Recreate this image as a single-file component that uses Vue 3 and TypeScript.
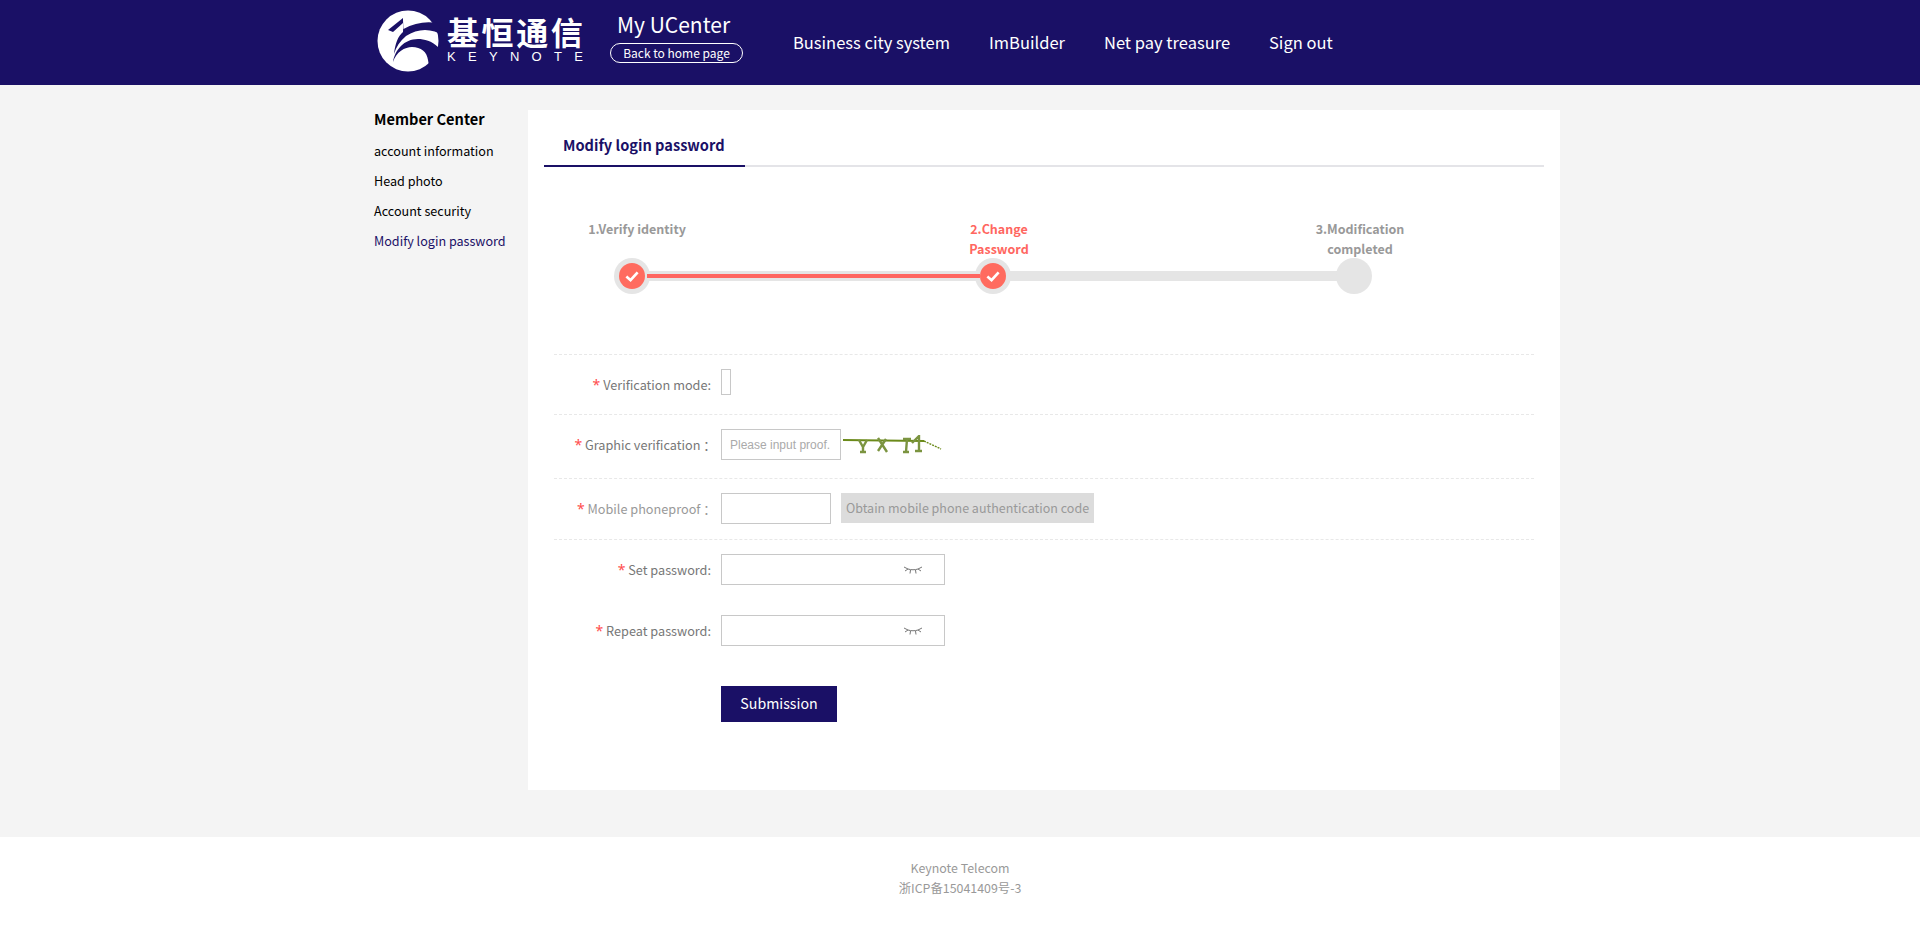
<script setup lang="ts">
const navItems: string[] = ['Business city system', 'ImBuilder', 'Net pay treasure', 'Sign out']
const sideItems: string[] = ['account information', 'Head photo', 'Account security', 'Modify login password']
</script>

<template>
  <div class="page">
    <header class="header">
      <div class="wrap head-in">
        <div class="logo">
          <svg class="mark" viewBox="0 0 72 70" width="72" height="70">
            <circle cx="34" cy="35" r="30.5" fill="#fff" />
            <path d="M29 12 L14 24 L19 26 L29 17 Z" fill="#1a1066" />
            <path d="M29.5 14 L29.5 23 C40 17 52 15 63 17 L70 30 C58 22 44 22 32 30 C26 35 22 41 20 48 C21 38 24 30 29 26 Z" fill="#1a1066" />
            <path d="M19 56 C22 46 31 41 38 41 C47 41 53 46 54 54 L56 66 L72 62 L72 38 L64 41 C58 35 50 33 44 33 C30 33 21 44 19 56 Z" fill="#1a1066" />
          </svg>
          <div class="logo-text">
            <div class="logo-cn">基恒通信</div>
            <div class="logo-en">KEYNOTE</div>
          </div>
        </div>
        <div class="ucenter">
          <div class="uc-title">My UCenter</div>
          <a class="uc-back">Back to home page</a>
        </div>
        <nav class="nav">
          <a v-for="n in navItems" :key="n">{{ n }}</a>
        </nav>
      </div>
    </header>

    <main class="wrap body">
      <aside class="side">
        <h3>Member Center</h3>
        <a v-for="(s, i) in sideItems" :key="s" :class="{ on: i === 3 }">{{ s }}</a>
      </aside>
      <section class="card">
        <div class="tabs"><span class="tab">Modify login password</span></div>

        <div class="steps">
          <div class="labels">
            <span class="lb l1">1.Verify identity</span>
            <span class="lb l2">2.Change<br />Password</span>
            <span class="lb l3">3.Modification<br />completed</span>
          </div>
          <div class="track">
            <div class="dot done">
              <i><svg viewBox="0 0 16 16" width="18" height="18"><path d="M3 8.5 L6.7 11.7 L13 4.8" fill="none" stroke="#fff" stroke-width="2.4" /></svg></i>
            </div>
            <div class="seg red"></div>
            <div class="dot done">
              <i><svg viewBox="0 0 16 16" width="18" height="18"><path d="M3 8.5 L6.7 11.7 L13 4.8" fill="none" stroke="#fff" stroke-width="2.4" /></svg></i>
            </div>
            <div class="seg"></div>
            <div class="dot"></div>
          </div>
        </div>

        <form class="form" @submit.prevent>
          <div class="row r1 dash">
            <label class="lab"><em>*</em> Verification mode:</label>
            <span class="mini"></span>
          </div>
          <div class="row r2 dash">
            <label class="lab sp"><em>*</em> Graphic verification ：</label>
            <input class="inp w120" placeholder="Please input proof." />
            <svg class="captcha" viewBox="0 0 100 24" width="100" height="24">
              <path d="M1 5 L82 6" stroke="#6b8a1a" stroke-width="2" fill="none" />
              <path d="M82 6 L99 14" stroke="#6b8a1a" stroke-width="1.4" stroke-dasharray="2 1" fill="none" />
              <g stroke="#7b9440" stroke-width="2.4" fill="none">
                <path d="M17 5 L21 12 L25 5 M21 12 L21 17 M18 17 L24 17" />
                <path d="M36 3 L45 17 M44 4 L36 16" />
                <path d="M61 4 L69 4 M65 4 L64 17 M61 17 L67 17" />
                <path d="M70 8 L77 1 L77 16 M73 16 L80 16" />
              </g>
            </svg>
          </div>
          <div class="row r3 dash">
            <label class="lab sp lt"><em>*</em> Mobile phoneproof ：</label>
            <input class="inp w110" />
            <button type="button" class="code">Obtain mobile phone authentication code</button>
          </div>
          <div class="row r4 dash">
            <label class="lab"><em>*</em> Set password:</label>
            <div class="pwd">
              <svg viewBox="0 0 18 8" width="18" height="8"><path d="M0 1 L4 3 C7 4 11 4 14 3 L18 1 M1 5 L4 3 M14 3 L17 5 M6.5 4 L6 7.5 M11.5 4 L12 7.5" fill="none" stroke="#777" stroke-width="1" /></svg>
            </div>
          </div>
          <div class="row r5">
            <label class="lab"><em>*</em> Repeat password:</label>
            <div class="pwd">
              <svg viewBox="0 0 18 8" width="18" height="8"><path d="M0 1 L4 3 C7 4 11 4 14 3 L18 1 M1 5 L4 3 M14 3 L17 5 M6.5 4 L6 7.5 M11.5 4 L12 7.5" fill="none" stroke="#777" stroke-width="1" /></svg>
            </div>
          </div>
          <button type="submit" class="submit">Submission</button>
        </form>
      </section>
    </main>

    <footer class="footer">
      <p>Keynote Telecom</p>
      <p>浙ICP备15041409号-3</p>
    </footer>
  </div>
</template>

<style>
html, body { margin: 0; background: #f4f4f4; }
</style>

<style scoped>
.page {
  font-family: "Noto Sans CJK SC", "Noto Sans", sans-serif;
  min-height: 937px;
  display: flex;
  flex-direction: column;
  background: #f4f4f4;
  font-size: 12px;
  color: #333;
}
.wrap { width: 1200px; margin: 0 auto; }
.header { height: 85px; background: #1a1066; color: #fff; }
.head-in { display: flex; height: 85px; }
.logo { display: flex; width: 250px; padding: 6px 0 0 14px; box-sizing: border-box; flex: none; }
.mark { flex: none; }
.logo-text { margin-left: 1px; width: 136px; }
.logo-cn { font-weight: 700; font-size: 32px; line-height: 36px; letter-spacing: 2.6px; margin-top: 7px; white-space: nowrap; }
.logo-en { font-family: "Liberation Sans", sans-serif; font-size: 13px; line-height: 14px; letter-spacing: 12.3px; white-space: nowrap; margin-top: 1px; }
.ucenter { width: 183px; padding-top: 9px; box-sizing: border-box; flex: none; }
.uc-title { font-size: 21px; line-height: 30px; padding-left: 7px; }
.uc-back { display: block; width: 133px; height: 20px; box-sizing: border-box; border: 1px solid #fff; border-radius: 10px; font-size: 12px; line-height: 17px; text-align: center; margin-top: 4px; }
.nav { display: flex; gap: 39px; font-size: 16.5px; line-height: 85px; white-space: nowrap; }

.body { display: flex; align-items: flex-start; padding-top: 25px; height: 752px; box-sizing: border-box; flex: none; }
.side { width: 168px; padding-left: 14px; box-sizing: border-box; flex: none; color: #000; }
.side h3 { margin: -1px 0 7px; font-size: 14.6px; font-weight: 700; line-height: 20px; }
.side a { display: block; font-size: 12.6px; line-height: 30px; white-space: nowrap; }
.side a.on { color: #1a1066; }

.card { width: 1032px; height: 680px; background: #fff; padding: 0 16px; box-sizing: border-box; flex: none; }
.tabs { height: 57px; border-bottom: 2px solid #e4e4e8; box-sizing: border-box; }
.tab { display: inline-block; height: 57px; width: 201px; box-sizing: border-box; border-bottom: 2px solid #1a1066; padding-left: 19px; color: #1a1066; font-size: 14.6px; font-weight: 700; line-height: 70px; }

.steps { position: relative; height: 187px; }
.labels { position: absolute; left: 0; top: 52px; width: 100%; height: 40px; font-size: 12.5px; font-weight: 700; line-height: 20px; color: #999; text-align: center; }
.lb { position: absolute; top: 0; white-space: nowrap; transform: translateX(-50%); }
.l1 { left: 93px; }
.l2 { left: 455px; color: #ff6660; }
.l3 { left: 816px; }
.track { position: absolute; left: 70px; top: 91px; display: flex; align-items: center; width: 758px; }
.dot { width: 36px; height: 36px; border-radius: 50%; background: #e5e5e5; display: flex; align-items: center; justify-content: center; flex: none; }
.dot i { width: 26px; height: 26px; border-radius: 50%; background: #ff6b5f; display: flex; align-items: center; justify-content: center; }
.seg { flex: 1; height: 10px; background: #e5e5e5; margin: 0 -1px; display: flex; align-items: center; }
.seg.red { position: relative; z-index: 1; }
.seg.red::before { content: ""; display: block; flex: 1; height: 4px; margin: 0 -4px 0 -2px; background: #ff6660; }

.form { padding-left: 10px; width: 980px; }
.row { display: flex; align-items: flex-start; }
.dash { border-top: 1px dashed #e8e8e8; }
.lab { width: 157px; text-align: right; font-size: 12.7px; color: #777; margin-right: 10px; flex: none; white-space: nowrap; line-height: 31px; }
.lab.sp { margin-right: 5px; width: 162px; }
.lab.lt { color: #999; }
.lab em { color: #ff4d4d; font-style: normal; font-family: "Noto Sans", sans-serif; font-size: 14px; }
.r1, .r2, .r3, .r4 { padding-top: 14px; box-sizing: border-box; }
.r1 { height: 60px; }
.r2 { height: 64px; }
.r3 { height: 61px; }
.r4 { height: 76px; }
.r5 { height: 71px; }
.mini { width: 10px; height: 26px; border: 1px solid #c8c8c8; box-sizing: border-box; }
.inp { height: 31px; border: 1px solid #c8c8c8; box-sizing: border-box; padding: 0 8px; font-family: "Liberation Sans", Arial, sans-serif; font-size: 12px; background: #fff; outline: none; }
.inp::placeholder { color: #aaa; }
.w120 { width: 120px; }
.w110 { width: 110px; }
.captcha { margin: 6px 0 0 1px; flex: none; }
.code { margin-left: 10px; width: 253px; height: 30px; background: #dcdcdc; border: none; padding: 0 0 2px; color: #999; font-family: inherit; font-size: 12.5px; white-space: nowrap; }
.pwd { width: 224px; height: 31px; border: 1px solid #c8c8c8; box-sizing: border-box; display: flex; align-items: center; justify-content: flex-end; padding-right: 22px; }
.submit { display: block; margin-left: 167px; width: 116px; height: 36px; background: #1a1066; color: #fff; border: none; font-family: inherit; font-size: 14.2px; padding: 0 0 3px; }

.footer { background: #fff; flex: 1; padding-top: 21px; text-align: center; color: #999; font-size: 12.4px; line-height: 20px; }
.footer p { margin: 0; }
</style>
